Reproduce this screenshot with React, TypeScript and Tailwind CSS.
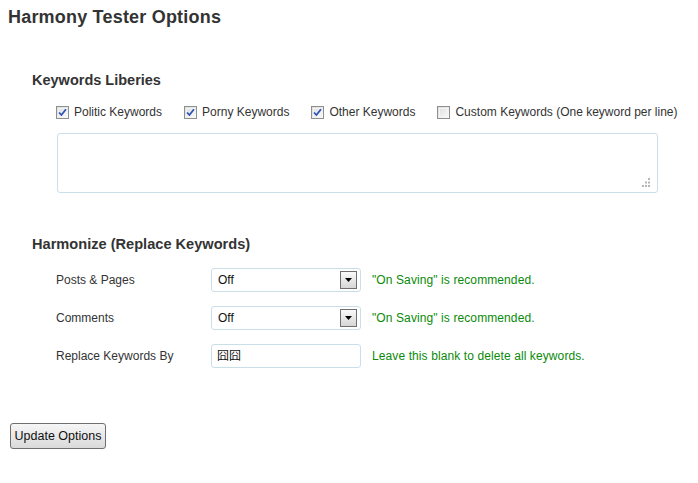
import React from 'react';

function Check({ checked }: { checked: boolean }) {
  return (
    <span className="relative inline-flex w-[13px] h-[13px] border border-[#8e8f8f] bg-gradient-to-br from-[#dcdcdc] to-[#fbfbfb] items-center justify-center">
      <span className="absolute inset-[1px] border border-[#f4f4f4]" />
      {checked && (
        <svg width="9" height="9" viewBox="0 0 9 9" className="relative">
          <path d="M1 4.5 L3.4 7 L8 1.2" fill="none" stroke="#2b54b8" strokeWidth="1.8" />
        </svg>
      )}
    </span>
  );
}

function Select() {
  return (
    <div className="flex items-center w-[150px] h-[24px] border border-[#cbdfe9] rounded-[3px] bg-white pl-[6px] pr-[3px]">
      <span className="flex-1 text-[12px] text-[#111]">Off</span>
      <span className="flex items-center justify-center w-[17px] h-[18px] border border-[#6f6f6f] bg-gradient-to-b from-[#fafafa] to-[#d6d6d6]">
        <svg width="7" height="4" viewBox="0 0 7 4">
          <path d="M0 0 H7 L3.5 4 Z" fill="#000" />
        </svg>
      </span>
    </div>
  );
}

export default function App() {
  const libs = [
    { label: 'Politic Keywords', checked: true },
    { label: 'Porny Keywords', checked: true },
    { label: 'Other Keywords', checked: true },
    { label: 'Custom Keywords (One keyword per line)', checked: false },
  ];

  const rows = [
    { label: 'Posts & Pages', field: <Select />, hint: '"On Saving" is recommended.' },
    { label: 'Comments', field: <Select />, hint: '"On Saving" is recommended.' },
    {
      label: 'Replace Keywords By',
      field: (
        <div className="flex items-center w-[150px] h-[24px] border border-[#cbdfe9] rounded-[3px] bg-white px-[5px] text-[12px] text-[#111] font-['Liberation_Sans','Noto_Sans_CJK_SC',sans-serif]">
          囧囧
        </div>
      ),
      hint: 'Leave this blank to delete all keywords.',
    },
  ];

  return (
    <div className="w-[698px] h-[483px] bg-white pl-2 text-[12px] text-[#333] font-['Liberation_Sans',Arial,sans-serif]">
      <h2 className="h-[34px] leading-[34px] text-[18px] tracking-[0.2px] font-bold text-[#333]">Harmony Tester Options</h2>

      <div className="ml-6">
        <h3 className="mt-[36px] h-[20px] leading-[20px] text-[14.5px] font-bold">Keywords Liberies</h3>
        <div className="mt-[12px] ml-6 h-[20px] flex items-center gap-[22px]">
          {libs.map((l) => (
            <label key={l.label} className="flex items-center gap-[5px]">
              <Check checked={l.checked} />
              <span>{l.label}</span>
            </label>
          ))}
        </div>
        <div className="relative mt-[11px] ml-[25px] w-[601px] h-[60px] border border-[#cbdfe9] rounded-[3px] bg-white">
          <svg width="9" height="9" viewBox="0 0 9 9" className="absolute right-[7px] bottom-[5px]">
            <rect x="7" y="0" width="2" height="2" fill="#b5b5b5" />
            <rect x="4" y="3.5" width="2" height="2" fill="#b5b5b5" />
            <rect x="7" y="3.5" width="2" height="2" fill="#b5b5b5" />
            <rect x="1" y="7" width="2" height="2" fill="#b5b5b5" />
            <rect x="4" y="7" width="2" height="2" fill="#b5b5b5" />
            <rect x="7" y="7" width="2" height="2" fill="#b5b5b5" />
          </svg>
        </div>

        <h3 className="mt-[41px] h-[20px] leading-[20px] text-[14.6px] font-bold">Harmonize (Replace Keywords)</h3>
        <div className="mt-[14px] ml-6 flex flex-col gap-[14px]">
          {rows.map((r) => (
            <div key={r.label} className="flex items-center h-[24px]">
              <span className="w-[155px]">{r.label}</span>
              {r.field}
              <span className="ml-[11px] text-[#0a8a0a] tracking-[0.1px]">{r.hint}</span>
            </div>
          ))}
        </div>
      </div>

      <button className="mt-[55px] ml-[2px] w-[96px] h-[26px] border border-[#707070] rounded-[3px] bg-gradient-to-b from-[#f6f6f6] to-[#dadada] text-[12.5px] text-[#111]">
        Update Options
      </button>
    </div>
  );
}
